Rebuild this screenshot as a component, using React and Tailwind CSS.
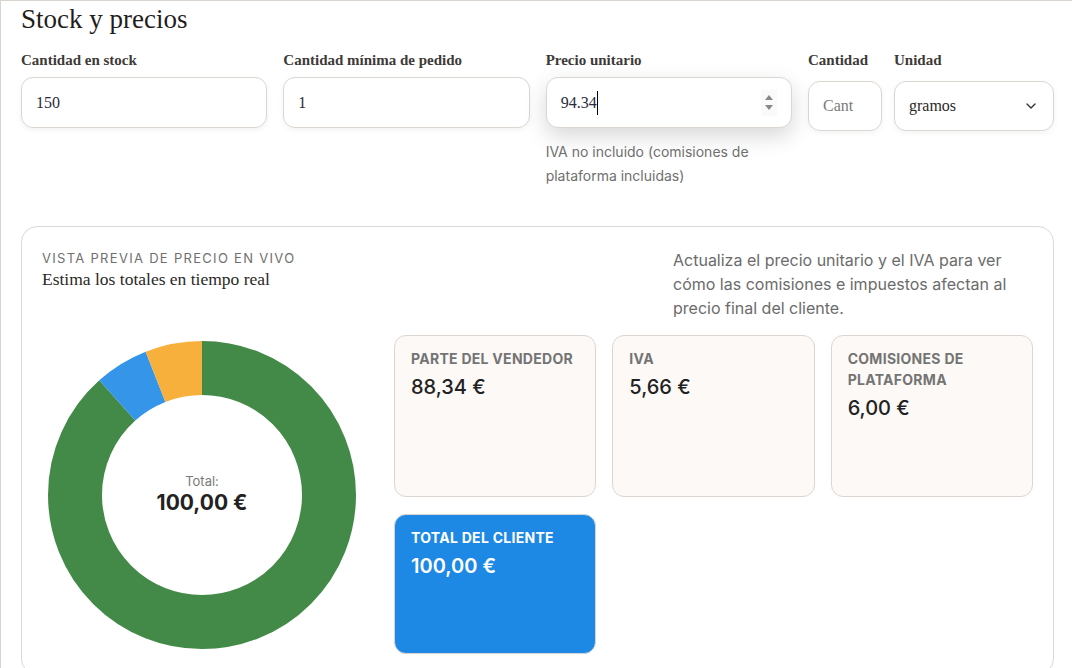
import React from 'react'
import { ChevronDown } from 'lucide-react'

const serif = 'font-["Liberation_Serif","DejaVu_Serif",serif]'
const sans = 'font-["Inter","Noto_Sans",sans-serif]'

const segments = [
  { name: 'Parte del vendedor', value: 88.34, color: '#438a48' },
  { name: 'IVA', value: 5.66, color: '#3595e8' },
  { name: 'Comisiones de plataforma', value: 6.0, color: '#f8b03d' },
]

function Donut() {
  const radius = 127
  const circ = 2 * Math.PI * radius
  const total = segments.reduce((s, x) => s + x.value, 0)
  let offset = 0
  return (
    <div className="relative w-[308px] h-[308px]">
      <svg width="308" height="308" viewBox="0 0 308 308" className="-rotate-90">
        {segments.map((seg) => {
          const len = (seg.value / total) * circ
          const el = (
            <circle
              key={seg.name}
              cx="154"
              cy="154"
              r={radius}
              fill="none"
              stroke={seg.color}
              strokeWidth="54"
              strokeDasharray={`${len} ${circ - len}`}
              strokeDashoffset={-offset}
            />
          )
          offset += len
          return el
        })}
      </svg>
      <div className={`absolute inset-0 flex flex-col items-center justify-center ${sans}`}>
        <span className="text-[13px] leading-[16px] text-[#7a7a7a]">Total:</span>
        <span className="text-[21px] leading-[28px] font-bold text-[#222]">100,00 €</span>
      </div>
    </div>
  )
}

const labelCls = `${serif} text-[15px] leading-[20px] font-bold text-[#3d3a37]`
const boxCls = 'rounded-[12px] border border-[#dcd6d0] bg-white flex items-center'

function Field({ label, value, className = '' }) {
  return (
    <div className={`flex flex-col ${className}`}>
      <label className={`${labelCls} mb-[7px]`}>{label}</label>
      <div className={`h-[51px] ${boxCls} shadow-[0_2px_6px_rgba(0,0,0,0.05)] px-[14px] ${serif} text-[16px] text-[#2a2a3a]`}>
        {value}
      </div>
    </div>
  )
}

function StatCard({ label, value }) {
  return (
    <div className="h-[162px] rounded-[12px] border border-[#ddd6d0] bg-[#fcf9f6] px-4 pt-3">
      <p className={`${sans} text-[14px] leading-[21px] font-bold uppercase tracking-[0.02em] text-[#747474]`}>{label}</p>
      <p className={`${sans} mt-[4px] text-[20px] leading-[28px] font-medium text-[#222]`}>{value}</p>
    </div>
  )
}

export default function App() {
  return (
    <div className="min-h-screen bg-white">
      <div className="border-l border-t border-[#d9d4cf] pl-[20px] pr-[18px] pb-10">
        <h2 className={`${serif} text-[27px] leading-[36px] text-[#1f1d1b]`}>Stock y precios</h2>

        {/* Inputs row */}
        <div className="flex gap-4 mt-[13px] items-start">
          <Field className="flex-1" label="Cantidad en stock" value="150" />
          <Field className="flex-1" label="Cantidad mínima de pedido" value="1" />
          <div className="flex-1 flex flex-col">
            <label className={`${labelCls} mb-[7px]`}>Precio unitario</label>
            <div className={`h-[51px] ${boxCls} shadow-[0_8px_22px_rgba(0,0,0,0.16)] pl-[14px] pr-[14px] ${serif} text-[16px] text-[#2a2a3a]`}>
              <span>94.34</span>
              <span className="inline-block w-px h-[24px] bg-black" />
              <div className="ml-auto flex flex-col items-center justify-center gap-[5px] w-[16px] h-[26px] bg-[#fafafa]">
                <span className="block w-0 h-0 border-l-[4px] border-r-[4px] border-b-[5px] border-l-transparent border-r-transparent border-b-[#888]" />
                <span className="block w-0 h-0 border-l-[4px] border-r-[4px] border-t-[5px] border-l-transparent border-r-transparent border-t-[#888]" />
              </div>
            </div>
            <p className={`${sans} mt-3 text-[14px] leading-[24px] text-[#6f6f6f] pr-10`}>
              IVA no incluido (comisiones de plataforma incluidas)
            </p>
          </div>
          <div className="flex gap-3">
            <div className="flex flex-col w-[74px]">
              <label className={`${labelCls} mb-[11px]`}>Cantidad</label>
              <div className={`h-[50px] ${boxCls} shadow-[0_2px_6px_rgba(0,0,0,0.05)] px-[14px] ${serif} text-[16px] text-[#7a7a7a]`}>
                Cant
              </div>
            </div>
            <div className="flex flex-col w-[160px]">
              <label className={`${labelCls} mb-[11px]`}>Unidad</label>
              <div className={`h-[50px] ${boxCls} shadow-[0_2px_6px_rgba(0,0,0,0.05)] justify-between px-[14px] ${serif} text-[16px] text-[#2a2a2a]`}>
                <span>gramos</span>
                <ChevronDown size={16} strokeWidth={2} className="text-[#333]" />
              </div>
            </div>
          </div>
        </div>

        {/* Live preview */}
        <div className="mt-[38px] rounded-[16px] border border-[#ddd8d3] bg-white px-[20px] pt-[21px] pb-[20px]">
          <div className="flex justify-between items-start">
            <div>
              <p className={`${sans} text-[13px] leading-[20px] uppercase tracking-[0.1em] text-[#6f6f6f]`}>
                Vista previa de precio en vivo
              </p>
              <p className={`${serif} text-[17.5px] leading-[22px] text-[#2a2826]`}>Estima los totales en tiempo real</p>
            </div>
            <p className={`${sans} w-[360px] text-[16px] leading-[24px] text-[#6b6b6b]`}>
              Actualiza el precio unitario y el IVA para ver cómo las comisiones e impuestos afectan al precio final del cliente.
            </p>
          </div>

          <div className="mt-[15px] flex items-center gap-8">
            <div className="w-[320px] flex justify-center">
              <Donut />
            </div>
            <div className="flex-1 grid grid-cols-3 gap-x-4 gap-y-[17px]">
              <StatCard label="Parte del vendedor" value="88,34 €" />
              <StatCard label="IVA" value="5,66 €" />
              <StatCard label="Comisiones de plataforma" value="6,00 €" />
              <div className="h-[140px] rounded-[12px] border border-[#d5d5d5] bg-[#1e88e5] px-4 pt-3">
                <p className={`${sans} text-[14px] leading-[21px] font-bold uppercase tracking-[0.02em] text-white`}>Total del cliente</p>
                <p className={`${sans} mt-[4px] text-[20px] leading-[28px] font-semibold text-white`}>100,00 €</p>
              </div>
            </div>
          </div>
        </div>
      </div>
    </div>
  )
}
